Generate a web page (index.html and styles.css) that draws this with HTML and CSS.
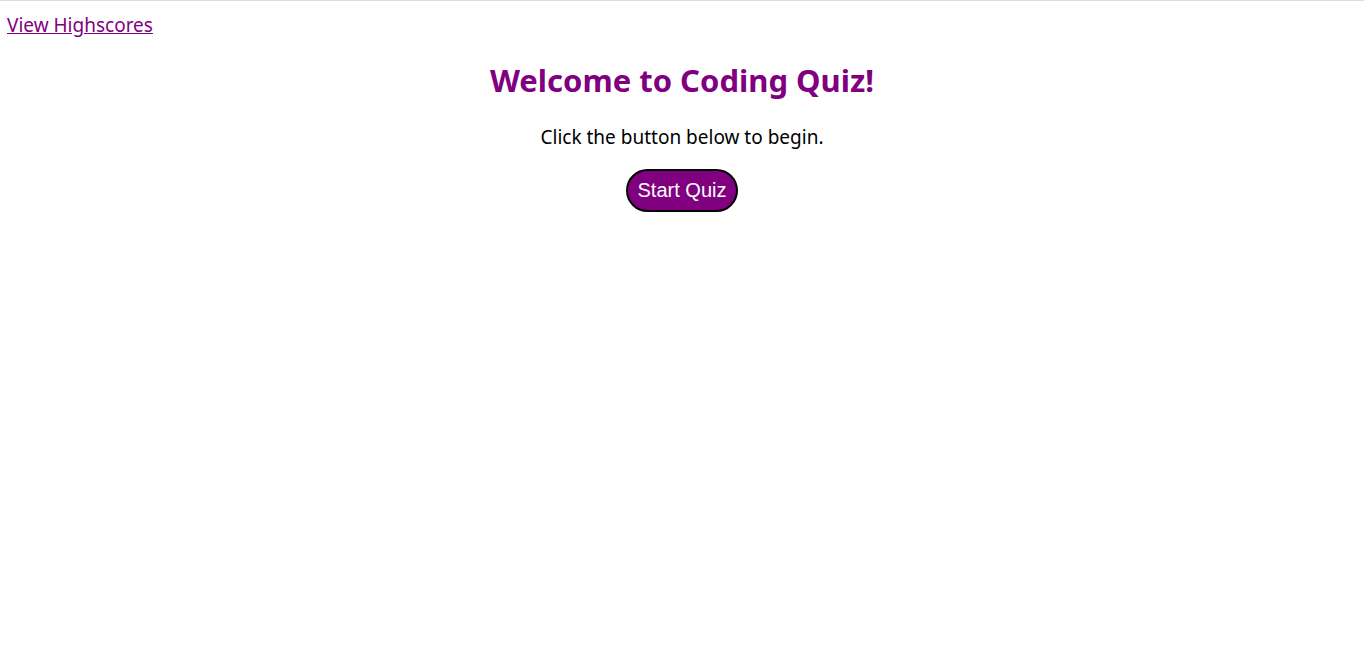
FILE: index.html
```html
<!DOCTYPE html>
<html lang="en">
<head>
<meta charset="utf-8">
<title>Coding Quiz</title>
<link rel="stylesheet" href="styles.css">
</head>
<body>
<header class="topbar">
  <a class="scores-link" href="#">View Highscores</a>
</header>
<main class="intro">
  <h1 class="title">Welcome to Coding Quiz!</h1>
  <p class="lead">Click the button below to begin.</p>
  <button class="start-btn" type="button">Start Quiz</button>
</main>
</body>
</html>
```
FILE: styles.css
```css
html, body {
  margin: 0;
  padding: 0;
  background: #fff;
}
body {
  border-top: 1px solid #dcdcdc;
  font-family: "Noto Sans", "Open Sans", sans-serif;
  color: #000;
}
.topbar {
  padding: 10px 7px 0;
  height: 30px;
}
.scores-link {
  color: #800080;
  font-size: 19px;
  line-height: 28px;
  text-decoration: underline;
}
.intro {
  display: flex;
  flex-direction: column;
  align-items: center;
}
.title {
  margin: 19px 0 0;
  color: #800080;
  font-size: 31px;
  font-weight: 700;
  line-height: 40px;
}
.lead {
  margin: 23px 0 0;
  font-size: 19px;
  line-height: 28px;
}
.start-btn {
  margin-top: 18px;
  background: #800080;
  color: #fff;
  border: 2px solid #000;
  border-radius: 22px;
  font-family: "Liberation Sans", Arial, sans-serif;
  font-size: 20px;
  height: 43px;
  width: 112px;
  padding: 0;
}
```
